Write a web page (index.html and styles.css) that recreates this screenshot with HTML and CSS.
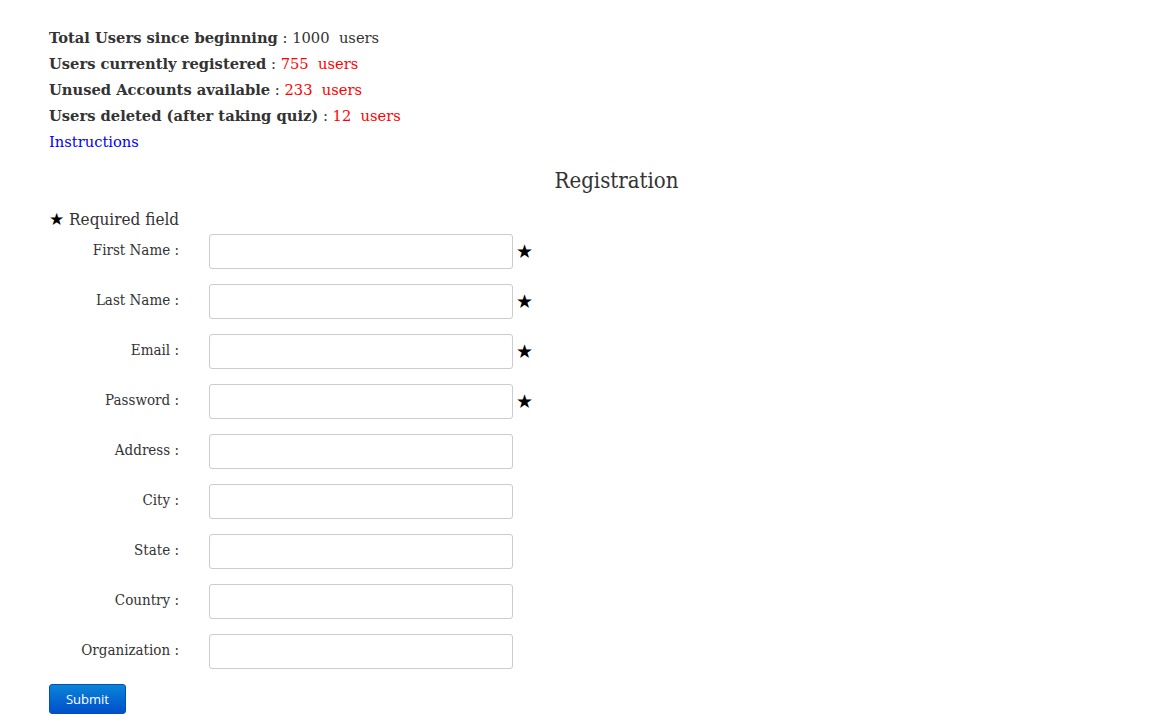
FILE: index.html
```html
<!DOCTYPE html>
<html>
<head>
<meta charset="utf-8">
<link rel="stylesheet" href="styles.css">
</head>
<body>
<div class="page">
  <div class="stats">
    <div class="stat"><span class="k">Total Users since beginning</span> : <span class="v">1000</span>&nbsp; users</div>
    <div class="stat"><span class="k">Users currently registered</span> : <span class="red">755&nbsp; users</span></div>
    <div class="stat"><span class="k">Unused Accounts available</span> : <span class="red">233&nbsp; users</span></div>
    <div class="stat"><span class="k">Users deleted (after taking quiz)</span> : <span class="red">12&nbsp; users</span></div>
    <div class="stat"><a class="link" href="#">Instructions</a></div>
  </div>
  <h2 class="title">Registration</h2>
  <div class="req"><span class="star">★</span> Required field</div>
  <form class="form">
    <div class="row"><label class="lbl">First Name :</label><input class="inp" type="text"><span class="star rs">★</span></div>
    <div class="row"><label class="lbl">Last Name :</label><input class="inp" type="text"><span class="star rs">★</span></div>
    <div class="row"><label class="lbl">Email :</label><input class="inp" type="text"><span class="star rs">★</span></div>
    <div class="row"><label class="lbl">Password :</label><input class="inp" type="password"><span class="star rs">★</span></div>
    <div class="row"><label class="lbl">Address :</label><input class="inp" type="text"></div>
    <div class="row"><label class="lbl">City :</label><input class="inp" type="text"></div>
    <div class="row"><label class="lbl">State :</label><input class="inp" type="text"></div>
    <div class="row"><label class="lbl">Country :</label><input class="inp" type="text"></div>
    <div class="row"><label class="lbl">Organization :</label><input class="inp" type="text"></div>
    <div class="actions"><button class="btn" type="button">Submit</button></div>
  </form>
</div>
</body>
</html>
```
FILE: styles.css
```css
html, body { margin: 0; padding: 0; background: #fff; }
body { font-family: "DejaVu Serif", "Liberation Serif", serif; color: #333; }
.page { padding: 25px 49px 0 49px; }
.stats { font-size: 14.7px; line-height: 26px; }
.stat { white-space: nowrap; }
.k { font-weight: bold; }
.red { color: #f00; }
.link { color: #00f; text-decoration: none; }
.title {
  margin: 12px 0 0 0;
  padding-left: 64px;
  text-align: center;
  font-family: "DejaVu Serif Condensed", "DejaVu Serif", serif;
  font-weight: normal;
  font-size: 22px;
  line-height: 28px;
  color: #333;
}
.req {
  margin-top: 15px;
  font-family: "DejaVu Serif Condensed", "DejaVu Serif", serif;
  font-size: 17px;
  line-height: 18px;
}
.req .star { font-size: 17px; }
.star { color: #000; font-family: "DejaVu Sans", sans-serif; }
.form { margin-top: 6px; }
.row { display: flex; align-items: center; height: 35px; margin-bottom: 15px; }
.lbl {
  width: 130px;
  text-align: right;
  margin-right: 30px;
  font-family: "DejaVu Serif Condensed", "DejaVu Serif", serif;
  font-size: 15px;
  color: #333;
  align-self: flex-start;
  line-height: 33px;
}
.inp {
  box-sizing: border-box;
  width: 304px;
  height: 35px;
  border: 1px solid #ccc;
  border-radius: 3px;
  margin: 0;
  padding: 0 6px;
  background: #fff;
}
.rs { margin-left: 3px; font-size: 19px; line-height: 33px; }
.btn {
  width: 77px;
  height: 30px;
  border: 1px solid #0052b0;
  border-radius: 3px;
  background: linear-gradient(#0a84d8, #004fcc);
  color: #fff;
  font-family: "Open Sans", "Liberation Sans", sans-serif;
  font-size: 13px;
  padding: 0;
}
```
